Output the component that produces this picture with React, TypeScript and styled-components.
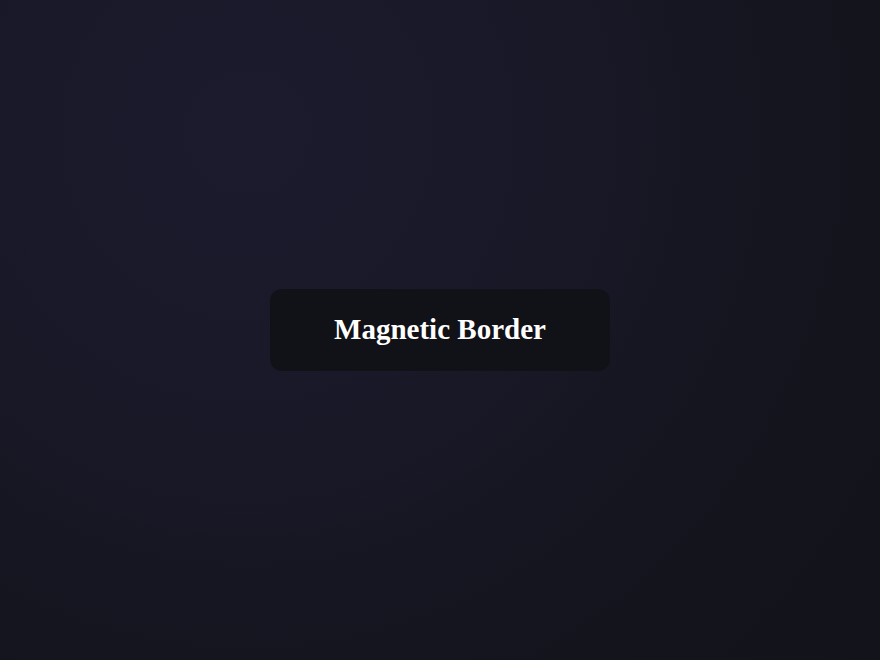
import React from 'react'
import styled, { createGlobalStyle } from 'styled-components'

const GlobalStyle = createGlobalStyle`
  html, body, #root {
    height: 100%;
    margin: 0;
  }
  body {
    background: #14141c;
    font-family: "Liberation Serif", "Times New Roman", serif;
  }
`

const Page = styled.div`
  align-items: center;
  background: radial-gradient(
    circle at 28% 20%,
    #1c1b2e 0%,
    #181827 40%,
    #14141d 75%,
    #13131b 100%
  );
  display: flex;
  height: 100%;
  justify-content: center;
  width: 100%;
`

const Card = styled.div`
  align-items: center;
  background: #111217;
  border-radius: 12px;
  display: flex;
  height: 82px;
  justify-content: center;
  width: 340px;
`

const Title = styled.h2`
  color: #ffffff;
  font-size: 29px;
  font-weight: 700;
  line-height: 1.15;
  margin: 0;
`

export default function App() {
  return (
    <>
      <GlobalStyle />
      <Page>
        <Card>
          <Title>Magnetic Border</Title>
        </Card>
      </Page>
    </>
  )
}
